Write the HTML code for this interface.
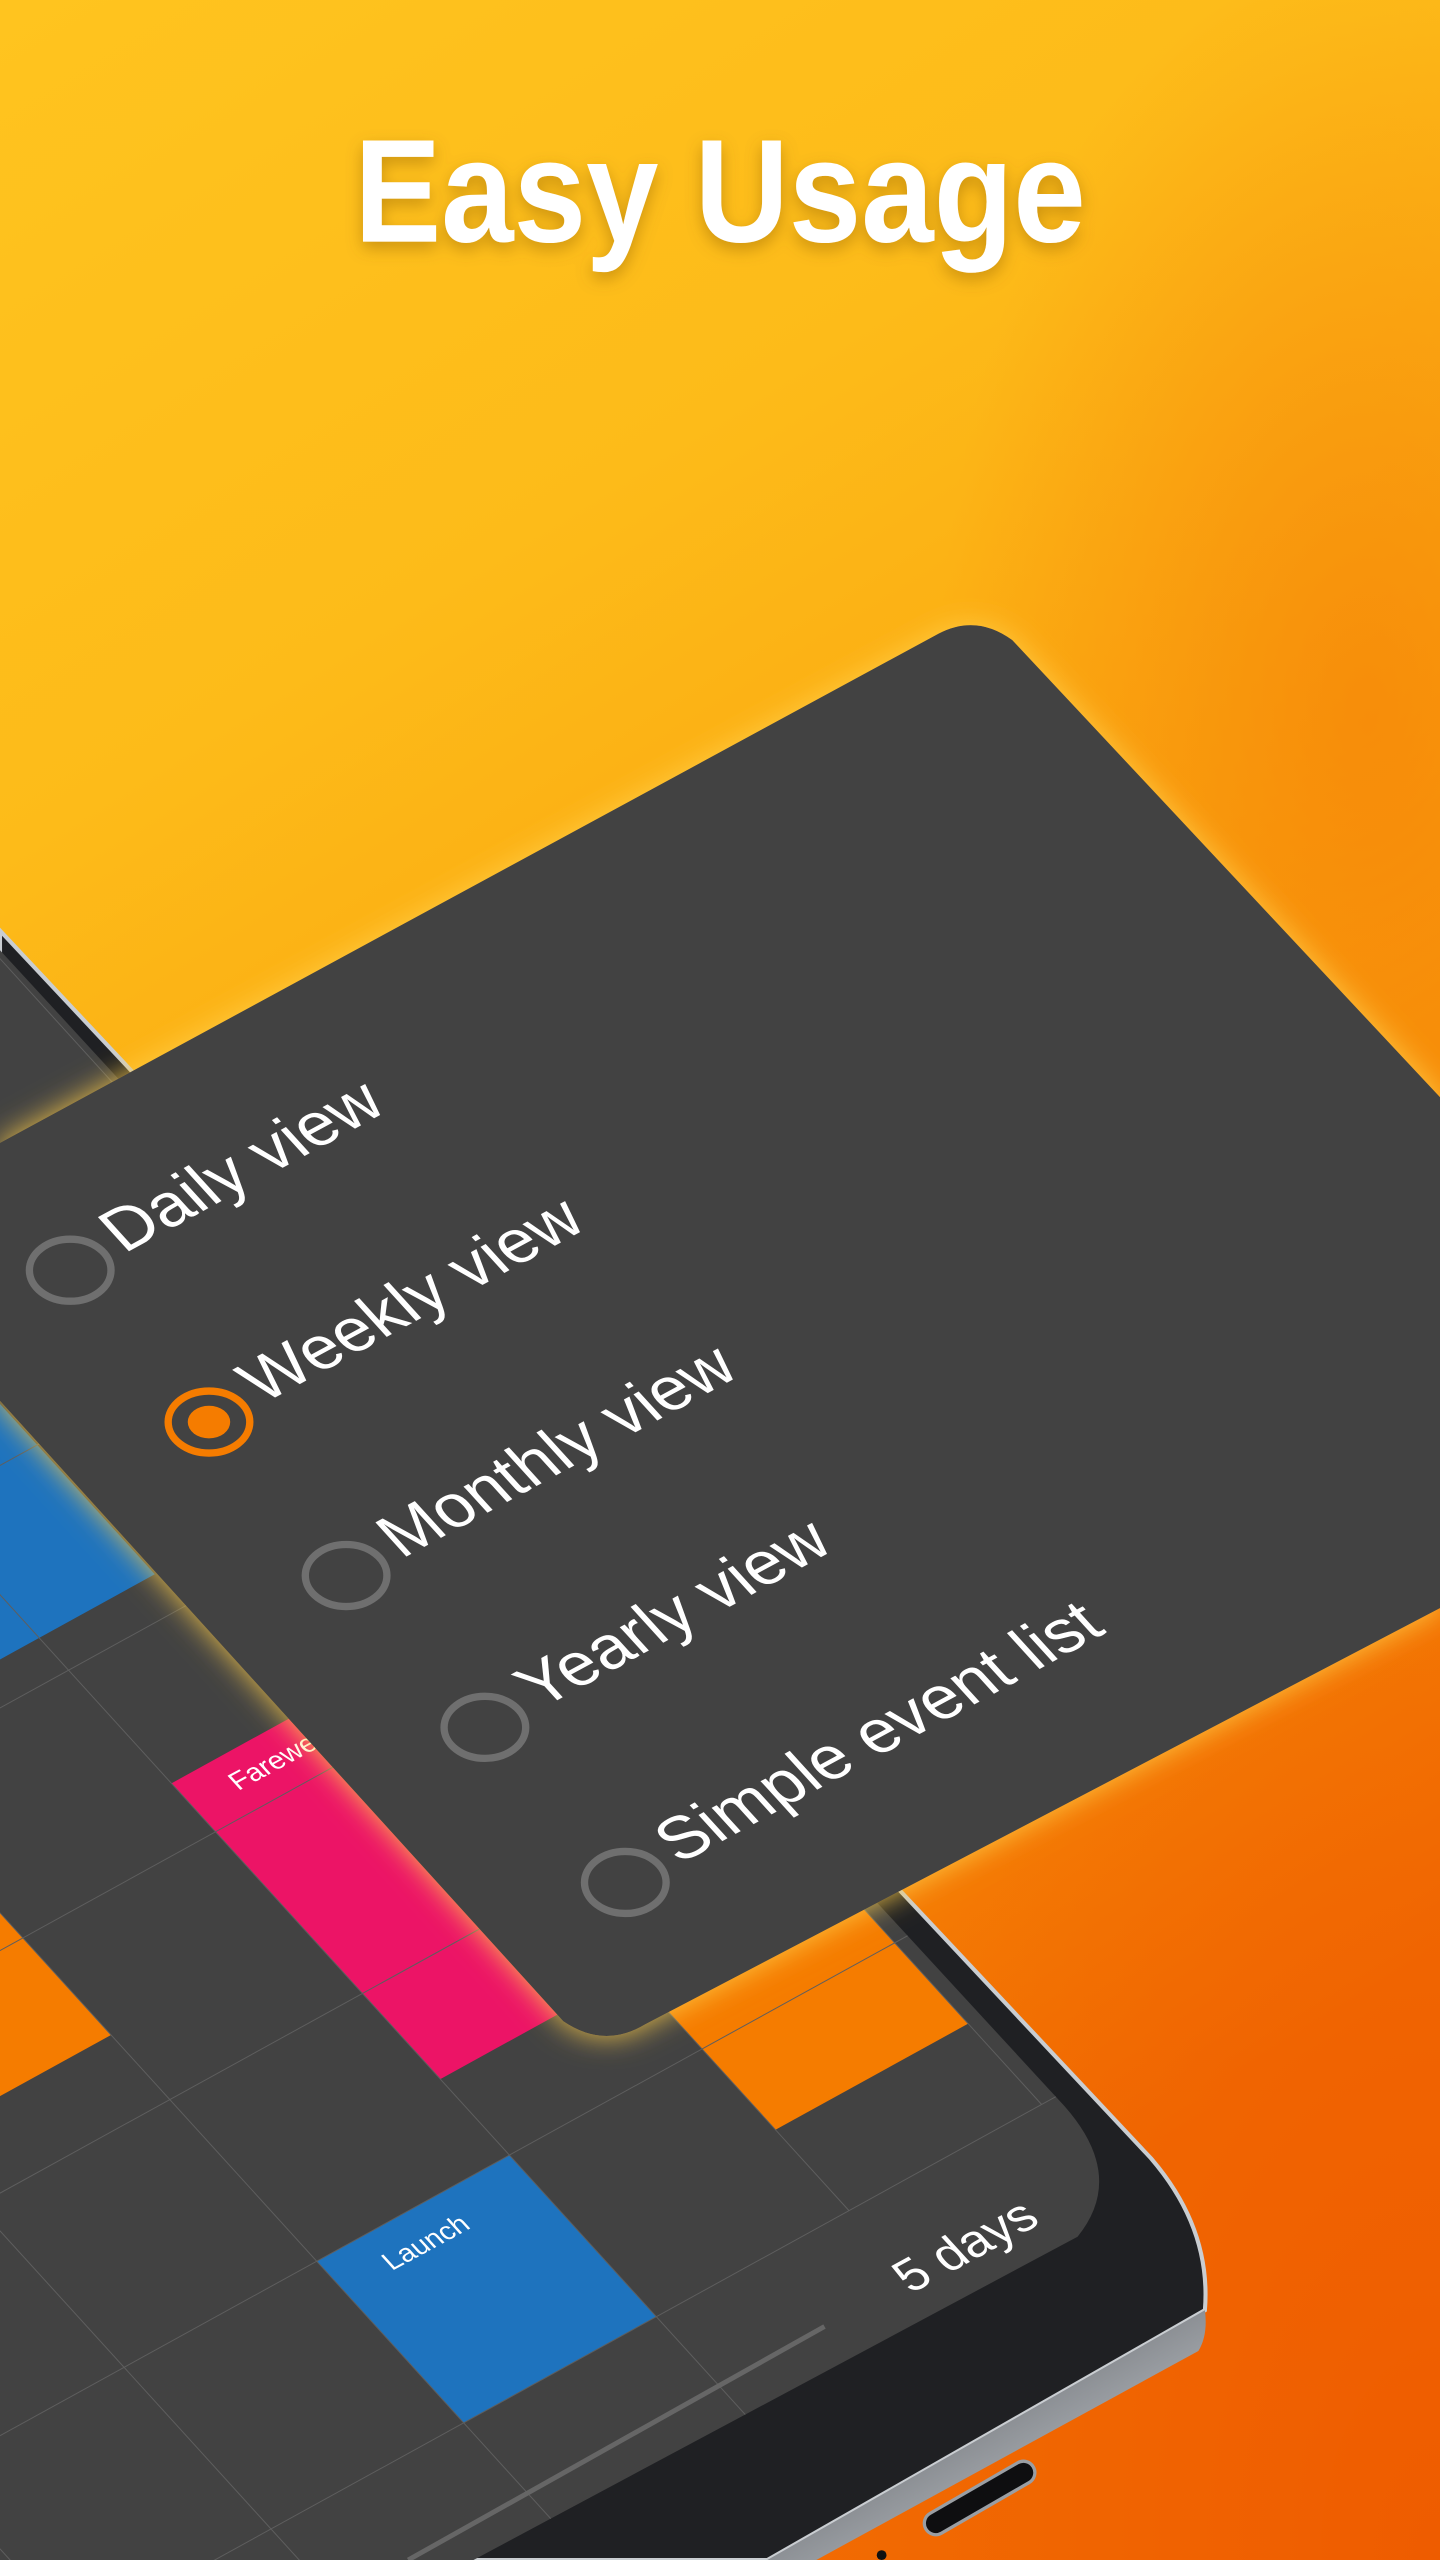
<!DOCTYPE html>
<html><head><meta charset="utf-8"><style>
html,body{margin:0;padding:0;width:1440px;height:2560px;overflow:hidden;background:#fdb515}
svg{display:block}
text{font-family:"Liberation Sans",sans-serif}
</style></head><body>
<svg width="1440" height="2560" viewBox="0 0 882 1568" xmlns="http://www.w3.org/2000/svg" style="position:absolute;left:0;top:0">
<defs>
<linearGradient id="bg" x1="0" y1="0" x2="0.35" y2="1">
<stop offset="0" stop-color="#ffc41f"/>
<stop offset="0.3" stop-color="#fdbb19"/>
<stop offset="0.55" stop-color="#fba60f"/>
<stop offset="0.8" stop-color="#f68806"/>
<stop offset="1" stop-color="#f26d02"/>
</linearGradient>
<radialGradient id="dk" cx="0.95" cy="0.28" r="0.3">
<stop offset="0" stop-color="#f47c06" stop-opacity="0.6"/>
<stop offset="1" stop-color="#f47c06" stop-opacity="0"/>
</radialGradient>
<radialGradient id="br" cx="1" cy="1" r="0.5">
<stop offset="0" stop-color="#ee5a00" stop-opacity="0.9"/>
<stop offset="1" stop-color="#ee5a00" stop-opacity="0"/>
</radialGradient>
<linearGradient id="metal" x1="0" y1="0" x2="1" y2="1">
<stop offset="0" stop-color="#3a3c40"/>
<stop offset="0.6" stop-color="#9da1a6"/>
<stop offset="1" stop-color="#3a3c40"/>
</linearGradient>
<filter id="glow" x="-20%" y="-20%" width="140%" height="140%">
<feDropShadow dx="0" dy="0" stdDeviation="9" flood-color="#ffce4a" flood-opacity="0.9"/>
</filter>
<filter id="tsh" x="-10%" y="-30%" width="120%" height="160%">
<feDropShadow dx="0" dy="4" stdDeviation="5" flood-color="#8a5a00" flood-opacity="0.45"/>
</filter>
<clipPath id="scr"><path d="M0,582 L652,1290 Q690,1333 660,1370 L290,1568 L0,1568 Z"/></clipPath>
</defs>
<rect width="882" height="1568" fill="url(#bg)"/>
<rect width="882" height="1568" fill="url(#dk)"/>
<rect width="882" height="1568" fill="url(#br)"/>

<!-- phone body -->
<path d="M0,570 L705,1322 Q742,1365 738,1415 L470,1568 L0,1568 Z" fill="#1f2023" stroke="#c9cdd1" stroke-width="2.5"/>
<path d="M738,1415 L470,1568 L500,1568 L734,1440 Q740,1430 738,1415 Z" fill="url(#metal)"/>
<g transform="translate(600,1530) rotate(-30)">
<rect x="-38" y="-7" width="76" height="14" rx="7" fill="#0e0e10" stroke="#9a9ea3" stroke-width="2"/>
</g>
<circle cx="540" cy="1565" r="3" fill="#111"/>

<!-- screen -->
<path d="M0,582 L652,1290 Q690,1333 660,1370 L290,1568 L0,1568 Z" fill="#424242"/>
<g clip-path="url(#scr)">
<g transform="matrix(118,-65,90,99,194,1385)">
<rect x="0" y="0" width="1" height="1" fill="#1e73be"/>
<rect x="1" y="-2.3" width="1" height="1.83" fill="#ec1466"/>
<rect x="2" y="-1.5" width="1" height="2" fill="#f57c00"/>
<rect x="-1" y="-3.2" width="1" height="1.8" fill="#f57c00"/>
<rect x="0" y="-7" width="1.6" height="3.8" fill="#1e73be"/>
<g stroke="#5e5e5e" stroke-width="1" fill="none">
<line x1="-3" y1="-9" x2="-3" y2="2" vector-effect="non-scaling-stroke"/>
<line x1="-2" y1="-9" x2="-2" y2="2" vector-effect="non-scaling-stroke"/>
<line x1="-1" y1="-9" x2="-1" y2="2" vector-effect="non-scaling-stroke"/>
<line x1="0" y1="-9" x2="0" y2="2" vector-effect="non-scaling-stroke"/>
<line x1="1" y1="-9" x2="1" y2="2" vector-effect="non-scaling-stroke"/>
<line x1="2" y1="-9" x2="2" y2="1" vector-effect="non-scaling-stroke"/>
<line x1="3" y1="-9" x2="3" y2="1" vector-effect="non-scaling-stroke"/>
<line x1="-5" y1="-5" x2="4" y2="-5" vector-effect="non-scaling-stroke"/>
<line x1="-5" y1="-4" x2="4" y2="-4" vector-effect="non-scaling-stroke"/>
<line x1="-5" y1="-3" x2="4" y2="-3" vector-effect="non-scaling-stroke"/>
<line x1="-5" y1="-2" x2="4" y2="-2" vector-effect="non-scaling-stroke"/>
<line x1="-5" y1="-1" x2="4" y2="-1" vector-effect="non-scaling-stroke"/>
<line x1="-5" y1="0" x2="4" y2="0" vector-effect="non-scaling-stroke"/>
<line x1="-5" y1="1" x2="4" y2="1" vector-effect="non-scaling-stroke"/>
</g>
</g>
<line x1="250" y1="1568" x2="505" y2="1425" stroke="#666" stroke-width="3"/>
<text transform="matrix(0.879,-0.477,0.673,0.74,558,1405)" font-size="31" fill="#fff">5 days</text>
<text transform="matrix(0.879,-0.477,0.673,0.74,240,1391)" font-size="17" fill="#fff">Launch</text>
<text transform="matrix(0.879,-0.477,0.673,0.74,146,1097)" font-size="17" fill="#fff">Farewell</text>
</g>

<!-- card -->
<path d="M0,700 L575,388 Q598,376 620,392 L882,672 L882,985 L395,1240 Q370,1255 345,1238 L0,858 Z" fill="#424242" filter="url(#glow)"/>
<g fill="#fff" font-size="41">
<text transform="matrix(0.879,-0.477,0.673,0.74,76,768)">Daily view</text>
<text transform="matrix(0.879,-0.477,0.673,0.74,161,860)">Weekly view</text>
<text transform="matrix(0.879,-0.477,0.673,0.74,246,955)">Monthly view</text>
<text transform="matrix(0.879,-0.477,0.673,0.74,331,1047)">Yearly view</text>
<text transform="matrix(0.879,-0.477,0.673,0.74,416,1142)">Simple event list</text>
</g>
<g fill="none" stroke="#6f6f6f" stroke-width="4.5">
<ellipse cx="43" cy="778" rx="25" ry="19"/>
<ellipse cx="212" cy="965" rx="25" ry="19"/>
<ellipse cx="297" cy="1058" rx="25" ry="19"/>
<ellipse cx="383" cy="1153" rx="25" ry="19"/>
</g>
<ellipse cx="128" cy="871" rx="25" ry="19" fill="none" stroke="#f57c00" stroke-width="4.5"/>
<ellipse cx="128" cy="871" rx="13" ry="10" fill="#f57c00"/>

<!-- title -->
<text x="441" y="148" text-anchor="middle" font-size="90" font-weight="bold" fill="#fff" textLength="448" lengthAdjust="spacingAndGlyphs" filter="url(#tsh)">Easy Usage</text>
</svg>
</body></html>
